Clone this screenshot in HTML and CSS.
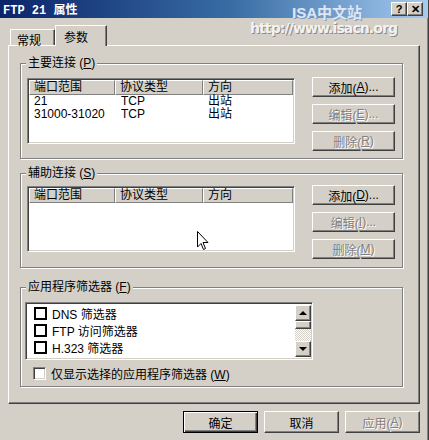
FILE: index.html
```html
<!DOCTYPE html>
<html lang="zh-CN">
<head>
    <meta charset="UTF-8">
    <title>FTP 21 属性</title>
    <link rel="stylesheet" href="styles.css">
</head>
<body>
    <div class="window">
        <!-- Title bar -->
        <div class="titlebar">
            <span class="title">FTP 21 属性</span>
            <div class="caption-btns">
                <span class="cap-btn">?</span>
                <span class="cap-btn">✕</span>
            </div>
        </div>

        <!-- watermark from the original capture -->
        <div class="wm-site">ISA中文站</div>
        <div class="wm-url">http://www.isacn.org</div>

        <div class="content">
            <div class="tabs">
                <div class="tab">常规</div>
                <div class="tab active">参数</div>
            </div>

            <div class="panel">
                <!-- Primary connections -->
                <div class="group g1">
                    <div class="group-title">主要连接 (<u>P</u>)</div>
                    <div class="listview">
                        <div class="lv-header">
                            <div class="lv-col">端口范围</div>
                            <div class="lv-col">协议类型</div>
                            <div class="lv-col">方向</div>
                        </div>
                        <div class="lv-row"><div>21</div><div>TCP</div><div>出站</div></div>
                        <div class="lv-row"><div>31000-31020</div><div>TCP</div><div>出站</div></div>
                    </div>
                    <div class="btn-col">
                        <div class="btn">添加(<u>A</u>)...</div>
                        <div class="btn disabled">编辑(<u>E</u>)...</div>
                        <div class="btn disabled">删除(<u>R</u>)</div>
                    </div>
                </div>

                <!-- Secondary connections -->
                <div class="group g2">
                    <div class="group-title">辅助连接 (<u>S</u>)</div>
                    <div class="listview">
                        <div class="lv-header">
                            <div class="lv-col">端口范围</div>
                            <div class="lv-col">协议类型</div>
                            <div class="lv-col">方向</div>
                        </div>
                    </div>
                    <div class="btn-col">
                        <div class="btn">添加(<u>D</u>)...</div>
                        <div class="btn disabled">编辑(<u>I</u>)...</div>
                        <div class="btn disabled">删除(<u>M</u>)</div>
                    </div>
                </div>

                <!-- Application filters -->
                <div class="group g3">
                    <div class="group-title">应用程序筛选器 (<u>F</u>)</div>
                    <div class="listbox">
                        <div class="lb-items">
                            <div class="lb-item"><span class="flat-check"></span>DNS 筛选器</div>
                            <div class="lb-item"><span class="flat-check"></span>FTP 访问筛选器</div>
                            <div class="lb-item"><span class="flat-check"></span>H.323 筛选器</div>
                            <div class="lb-item"><span class="flat-check"></span>MMS 筛选器</div>
                        </div>
                        <div class="scrollbar">
                            <div class="sb-btn"><span class="arrow-up"></span></div>
                            <div class="sb-thumb"></div>
                            <div class="sb-track"></div>
                            <div class="sb-btn"><span class="arrow-down"></span></div>
                        </div>
                    </div>
                    <div class="check-row">
                        <span class="checkbox"></span>
                        <span>仅显示选择的应用程序筛选器 (<u>W</u>)</span>
                    </div>
                </div>
            </div>

            <div class="footer">
                <div class="btn wide default">确定</div>
                <div class="btn wide">取消</div>
                <div class="btn wide disabled">应用(<u>A</u>)</div>
            </div>
        </div>

        <!-- mouse pointer in the capture -->
        <svg class="cursor" width="12" height="20" viewBox="0 0 12 20">
            <path d="M0.5 0.5 L0.5 16 L4 12.5 L6.5 18.5 L8.5 17.5 L6 11.5 L11 11.5 Z" fill="#fff" stroke="#000" stroke-width="1"/>
        </svg>
    </div>
</body>
</html>
```

FILE: styles.css
```css
/* Win2000 style property dialog */
* {
    margin: 0;
    padding: 0;
    box-sizing: border-box;
}

body {
    background: #d4d0c8;
}

.window {
    position: relative;
    width: 429px;
    height: 440px;
    overflow: hidden;
    background: #d4d0c8;
    border-right: 1px solid #404040;
    box-shadow: inset -1px 0 0 #808080;
    font: 12px "Liberation Sans", "Noto Sans CJK SC", sans-serif;
    color: #000;
}

u {
    text-decoration: underline;
    text-underline-offset: 1px;
}

/* title bar */
.titlebar {
    height: 18px;
    display: flex;
    align-items: center;
    justify-content: space-between;
    padding: 0 5px 0 3px;
    background: linear-gradient(to right, #0a246a, #3a6ea5 55%, #a6caf0);
}

.title {
    color: #fff;
    font-weight: bold;
    font-size: 12px;
    font-family: "Liberation Mono", "Noto Sans CJK SC", monospace;
}

.caption-btns {
    display: flex;
}

.cap-btn {
    width: 16px;
    height: 14px;
    display: flex;
    align-items: center;
    justify-content: center;
    background: #d4d0c8;
    border: 1px solid;
    border-color: #fff #404040 #404040 #fff;
    box-shadow: inset -1px -1px 0 #808080;
    font-weight: bold;
    font-size: 11px;
    line-height: 1;
}

.wm-site {
    position: absolute;
    top: 1px;
    left: 292px;
    color: #dbe7f7;
    font: bold 15px "Liberation Sans", "Noto Sans CJK SC", sans-serif;
    text-shadow: 1px 1px 0 #7f9cc4;
}

.wm-url {
    position: absolute;
    top: 20px;
    left: 250px;
    color: #f2f2f2;
    font: bold 14px "DejaVu Sans", sans-serif;
    letter-spacing: -0.9px;
    text-shadow: 1px 1px 0 #8a8a8a;
}

.content {
    padding: 0 8px 0 8px;
}

/* tabs */
.tabs {
    height: 27px;
    display: flex;
    align-items: flex-end;
}

.tab {
    width: 45px;
    height: 16px;
    margin-left: 2px;
    padding: 1px 0 0 6px;
    border: 1px solid #fff;
    border-bottom: none;
    border-right-color: #404040;
    box-shadow: inset -1px 0 0 #808080;
}

.tab.active {
    position: relative;
    z-index: 1;
    width: 52px;
    height: 21px;
    margin-left: 0;
    margin-bottom: -1px;
    padding: 2px 0 0 8px;
    background: #d4d0c8;
}

.panel {
    width: 412px;
    height: 359px;
    padding: 17px 0 0 11px;
    border: 1px solid;
    border-color: #fff #404040 #404040 #fff;
    box-shadow: inset -1px -1px 0 #808080;
}

/* group boxes */
.group {
    position: relative;
    width: 383px;
    display: flex;
    align-items: flex-start;
    gap: 17px;
    padding: 14px 0 0 6px;
    border: 1px solid #808080;
    box-shadow: inset 1px 1px 0 #fff, 1px 1px 0 #fff;
}

.g1 {
    height: 96px;
    margin-bottom: 14px;
}

.g2 {
    height: 95px;
    padding-top: 12px;
    margin-bottom: 19px;
}

.g3 {
    height: 100px;
    flex-direction: column;
    gap: 0;
    padding: 14px 0 0 4px;
}

.group-title {
    position: absolute;
    top: -8px;
    left: 5px;
    padding: 0 2px;
    line-height: 14px;
    background: #d4d0c8;
}

/* list views */
.listview {
    width: 268px;
    height: 66px;
    padding: 1px;
    background: #fff;
    border: 1px solid;
    border-color: #808080 #fff #fff #808080;
    box-shadow: inset 1px 1px 0 #404040, inset -1px -1px 0 #d4d0c8;
}

.lv-header,
.lv-row {
    display: grid;
    grid-template-columns: 86px 88px 1fr;
}

.lv-col {
    height: 15px;
    line-height: 13px;
    padding-left: 4px;
    background: #d4d0c8;
    border: 1px solid;
    border-color: #fff #808080 #808080 #fff;
}

.lv-row {
    height: 13px;
    line-height: 13px;
}

.lv-row div {
    padding-left: 5px;
}

.lv-row div:nth-child(2) {
    padding-left: 6px;
}

/* buttons */
.btn-col {
    display: flex;
    flex-direction: column;
    gap: 7px;
    margin-top: -1px;
}

.btn {
    width: 83px;
    height: 20px;
    display: flex;
    align-items: center;
    justify-content: center;
    background: #d4d0c8;
    border: 1px solid;
    border-color: #fff #404040 #404040 #fff;
    box-shadow: inset -1px -1px 0 #808080;
}

.btn.disabled {
    color: #808080;
    text-shadow: 1px 1px 0 #fff;
}

.btn.wide {
    width: 75px;
    height: 22px;
}

.btn.default {
    border: 1px solid #000;
    box-shadow: inset 1px 1px 0 #fff, inset -1px -1px 0 #404040, inset -2px -2px 0 #808080;
}

/* filter list */
.listbox {
    width: 288px;
    height: 58px;
    display: flex;
    padding: 2px 1px 2px 2px;
    background: #fff;
    border: 1px solid;
    border-color: #808080 #fff #fff #808080;
    box-shadow: inset 1px 1px 0 #404040, inset -1px -1px 0 #d4d0c8;
}

.lb-items {
    flex: 1;
    overflow: hidden;
}

.lb-item {
    height: 17px;
    display: flex;
    align-items: center;
    gap: 5px;
    padding-left: 6px;
}

.flat-check {
    width: 13px;
    height: 13px;
    border: 2px solid #000;
    background: #fff;
}

.scrollbar {
    width: 16px;
    display: flex;
    flex-direction: column;
}

.sb-btn,
.sb-thumb {
    height: 16px;
    display: flex;
    align-items: center;
    justify-content: center;
    background: #d4d0c8;
    border: 1px solid;
    border-color: #fff #404040 #404040 #fff;
    box-shadow: inset -1px -1px 0 #808080;
}

.sb-thumb {
    height: 8px;
}

.sb-track {
    flex: 1;
    background: repeating-conic-gradient(#fff 0 25%, #d4d0c8 0 50%) 0 0 / 2px 2px;
}

.arrow-up,
.arrow-down {
    width: 0;
    height: 0;
    border-left: 4px solid transparent;
    border-right: 4px solid transparent;
}

.arrow-up {
    border-bottom: 4px solid #000;
}

.arrow-down {
    border-top: 4px solid #000;
}

.check-row {
    display: flex;
    align-items: center;
    gap: 5px;
    margin-top: 5px;
    padding-left: 8px;
}

.checkbox {
    width: 13px;
    height: 13px;
    background: #fff;
    border: 1px solid;
    border-color: #808080 #fff #fff #808080;
    box-shadow: inset 1px 1px 0 #404040, inset -1px -1px 0 #d4d0c8;
}

/* dialog buttons */
.footer {
    display: flex;
    justify-content: flex-end;
    gap: 6px;
    margin-top: 7px;
}

.cursor {
    position: absolute;
    left: 197px;
    top: 231px;
}
```
